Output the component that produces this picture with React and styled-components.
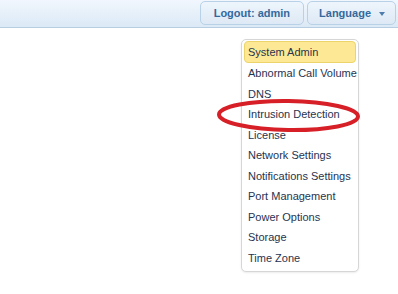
import React from 'react';
import styled, { createGlobalStyle } from 'styled-components';

const GlobalStyle = createGlobalStyle`
  html, body {
    margin: 0;
    padding: 0;
    background: #ffffff;
    font-family: "Liberation Sans", Arial, sans-serif;
  }
`;

const Page = styled.div`
  position: relative;
  width: 398px;
  height: 294px;
  overflow: hidden;
  background: #ffffff;
`;

const TopBar = styled.div`
  height: 28px;
  border-bottom: 1px solid #b7cde2;
  background: linear-gradient(to bottom, #f1f7fd 0%, #dbe9f6 100%);
  display: flex;
  justify-content: flex-end;
  align-items: flex-start;
  gap: 3px;
  padding: 1px 2px 0 0;
  box-sizing: border-box;
`;

const BarButton = styled.div`
  height: 24px;
  box-sizing: border-box;
  padding: 0 ${p => (p.$caret ? 10 : 13)}px 0 ${p => (p.$caret ? 11 : 13)}px;
  display: flex;
  align-items: center;
  gap: 8px;
  border: 1px solid #b9d1e7;
  border-radius: 5px;
  background: linear-gradient(to bottom, #eef5fc 0%, #dde9f5 100%);
  color: #34699b;
  font-size: 11px;
  font-weight: bold;
  white-space: nowrap;
`;

const Caret = styled.span`
  width: 0;
  height: 0;
  border-left: 3.5px solid transparent;
  border-right: 3.5px solid transparent;
  border-top: 4px solid #4d7eab;
  margin-top: 1px;
`;

const MenuWrap = styled.div`
  display: flex;
  padding: 11px 0 0 241px;
`;

const Menu = styled.ul`
  list-style: none;
  margin: 0;
  padding: 1px 2px 3px;
  width: 118px;
  box-sizing: border-box;
  border: 1px solid #d6d6d6;
  border-radius: 5px;
  background: #ffffff;
  box-shadow: 0 1px 2px rgba(0, 0, 0, 0.08);
`;

const MenuItem = styled.li`
  height: ${p => (p.$active ? 22 : 20.5)}px;
  box-sizing: border-box;
  display: flex;
  align-items: center;
  padding: 0 3px;
  font-size: 11px;
  color: #27334f;
  white-space: nowrap;
  border: 1px solid ${p => (p.$active ? '#ecd46a' : 'transparent')};
  border-radius: 4px;
  background: ${p => (p.$active ? '#fde995' : 'transparent')};
`;

const Annotation = styled.svg`
  position: absolute;
  left: 216px;
  top: 97px;
  pointer-events: none;
`;

const items = [
  'System Admin',
  'Abnormal Call Volume',
  'DNS',
  'Intrusion Detection',
  'License',
  'Network Settings',
  'Notifications Settings',
  'Port Management',
  'Power Options',
  'Storage',
  'Time Zone',
];

export default function App() {
  return (
    <Page>
      <GlobalStyle />
      <TopBar>
        <BarButton>Logout: admin</BarButton>
        <BarButton $caret>
          Language
          <Caret />
        </BarButton>
      </TopBar>
      <MenuWrap>
        <Menu>
          {items.map((item, i) => (
            <MenuItem key={item} $active={i === 0}>
              {item}
            </MenuItem>
          ))}
        </Menu>
      </MenuWrap>
      <Annotation width="146" height="38" viewBox="0 0 146 38">
        <ellipse
          cx="72.5"
          cy="18.5"
          rx="69.5"
          ry="14.5"
          fill="none"
          stroke="#d61f26"
          strokeWidth="4"
          transform="rotate(0.8 72.5 18.5)"
        />
      </Annotation>
    </Page>
  );
}
